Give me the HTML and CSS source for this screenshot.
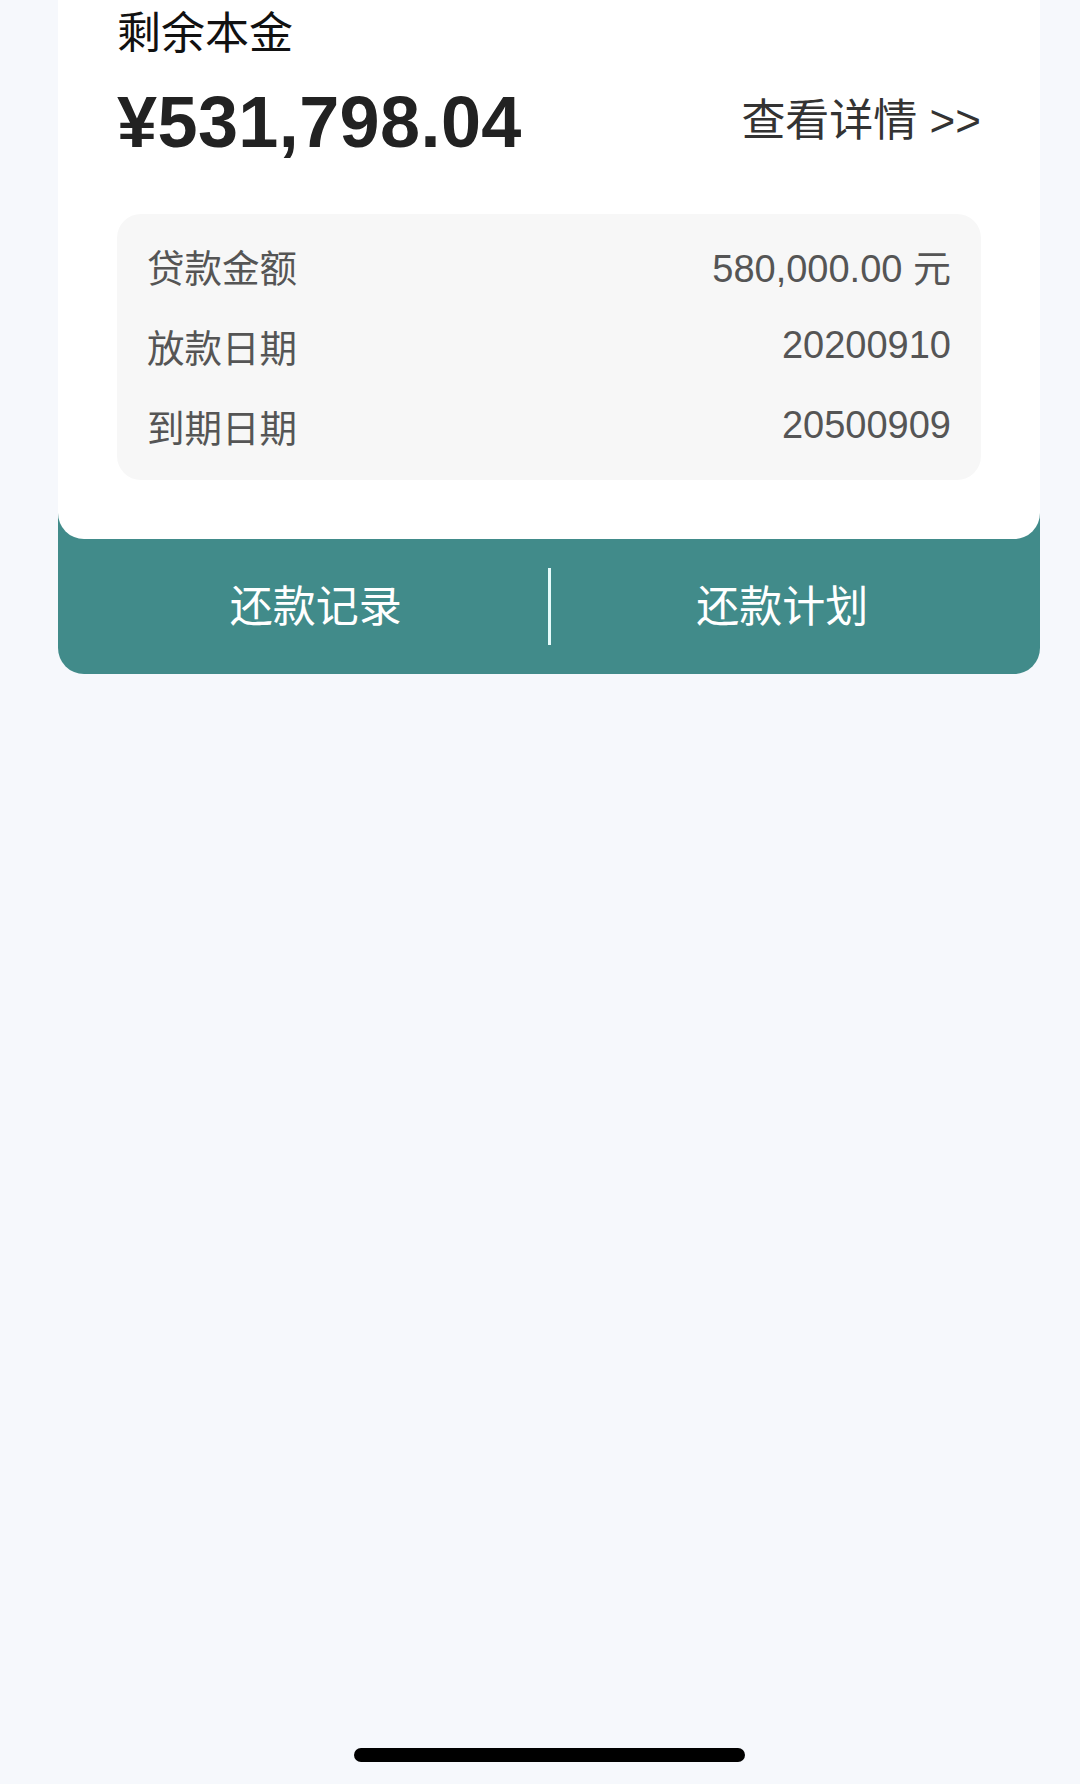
FILE: index.html
```html
<!DOCTYPE html>
<html lang="zh-CN">
<head>
<meta charset="utf-8">
<title>贷款详情</title>
<link rel="stylesheet" href="styles.css">
</head>
<body>
<div class="page">
  <div class="card">
    <div class="card-top">
      <div class="title">剩余本金</div>
      <div class="amount-row">
        <div class="amount">¥531,798.04</div>
        <div class="more">查看详情 &gt;&gt;</div>
      </div>
      <div class="details">
        <div class="detail-row"><span class="label">贷款金额</span><span class="value">580,000.00 元</span></div>
        <div class="detail-row"><span class="label">放款日期</span><span class="value">20200910</span></div>
        <div class="detail-row"><span class="label">到期日期</span><span class="value">20500909</span></div>
      </div>
    </div>
    <div class="actions">
      <div class="action">还款记录</div>
      <div class="divider"></div>
      <div class="action">还款计划</div>
    </div>
  </div>
  <div class="home-bar"></div>
</div>
</body>
</html>
```
FILE: styles.css
```css
* { box-sizing: border-box; }
html, body {
  margin: 0;
  padding: 0;
  background: #f6f8fc;
}
body {
  font-family: "Liberation Sans", "Noto Sans CJK SC", sans-serif;
}
.page {
  min-height: 100vh;
  display: flex;
  flex-direction: column;
}
.card {
  margin: 0 40px 0 58px;
  background: #418b8a;
  border-radius: 0 0 26px 26px;
}
.card-top {
  background: #ffffff;
  border-radius: 0 0 26px 26px;
  padding: 8px 59px 59px;
}
.title {
  font-size: 44px;
  line-height: 52px;
  color: #111;
}
.amount-row {
  display: flex;
  justify-content: space-between;
  align-items: center;
  margin-top: 22px;
  height: 80px;
}
.amount {
  font-size: 72px;
  font-weight: bold;
  line-height: 80px;
  color: #222;
  letter-spacing: 0.4px;
}
.more {
  font-size: 44px;
  line-height: 52px;
  color: #333;
  margin-top: -2px;
}
.details {
  margin-top: 52px;
  background: #f7f7f7;
  border-radius: 24px;
  padding: 11px 30px 15px;
}
.detail-row {
  height: 80px;
  display: flex;
  align-items: center;
  justify-content: space-between;
  color: #555;
}
.label {
  font-size: 37.5px;
}
.value {
  font-size: 38px;
}
.actions {
  display: flex;
  align-items: center;
  height: 135px;
  padding: 0 26px;
}
.action {
  flex: 1;
  text-align: center;
  color: #ffffff;
  font-size: 43px;
  line-height: 50px;
}
.divider {
  width: 3px;
  height: 77px;
  background: #e6fbfb;
}
.home-bar {
  margin: auto 0 22px 354px;
  width: 391px;
  height: 14px;
  border-radius: 7px;
  background: #000;
}
```
